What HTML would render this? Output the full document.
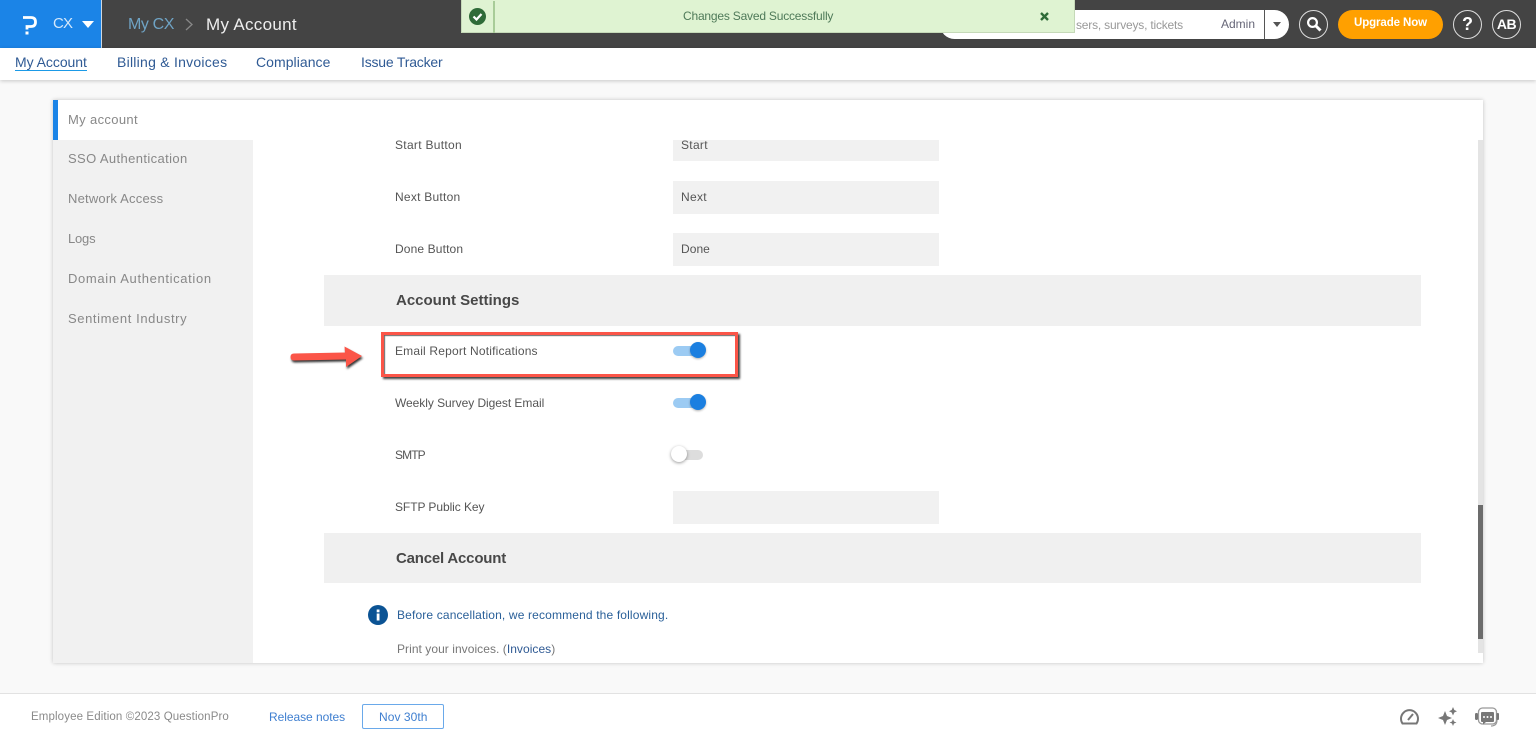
<!DOCTYPE html>
<html><head><meta charset="utf-8"><style>
html,body{margin:0;padding:0;width:1536px;height:739px;overflow:hidden;background:#f9f9f9;font-family:"Liberation Sans",sans-serif}
.t{position:absolute;white-space:nowrap;line-height:16px}
.b{position:absolute}
.lab{font-size:12px;color:#555;letter-spacing:.25px}
.side{font-size:13px;color:#888;left:68px}
.nav{font-size:14px;color:#2f5a94;top:54px}
.inp{position:absolute;left:673px;width:266px;background:#f1f1f1}
.inpt{font-size:12px;color:#555;left:681px;letter-spacing:.3px}
.tr{position:absolute;left:673px;width:30px;height:10px;border-radius:5px;background:#9ccbf3}
.kn{position:absolute;left:690px;width:16px;height:16px;border-radius:50%;background:#1b7fe0;box-shadow:0 1px 2px rgba(0,0,0,.3)}
.sec{position:absolute;left:324px;width:1097px;background:#f0f0f0}
.h{font-size:15px;font-weight:bold;color:#484848;left:396px}
.circ{position:absolute;top:10px;width:27px;height:27px;border:1px solid #ddd;border-radius:50%;color:#fff;text-align:center;font-weight:bold;line-height:27px}
</style></head><body>
<div class="b" style="left:0;top:0;width:1536px;height:48px;background:#444"></div>
<div class="b" style="left:0;top:0;width:101px;height:48px;background:#1b84e7;border-right:1px solid #cfd8e0"></div>
<svg class="b" style="left:20px;top:14px" width="20" height="22" viewBox="0 0 20 22"><path d="M3 3.500H11Q15.500 3.500 15.500 8Q15.500 12.500 11 12.500H7V15.500" fill="none" stroke="#fff" stroke-width="2.800"/><rect x="5.500" y="17.500" width="3" height="3" fill="#fff"/></svg>
<div class="t" style="left:53px;top:16px;font-size:15px;letter-spacing:-.8px;color:#d5e8fa">CX</div>
<svg class="b" style="left:82px;top:21px" width="12" height="7"><path d="M0 0H12L6 7Z" fill="#fff"/></svg>
<div class="t" style="left:128px;top:17px;font-size:16px;color:#6fa3c4;letter-spacing:-.4px">My CX</div>
<svg class="b" style="left:185px;top:18px" width="9" height="13"><path d="M1 1L7 6.500L1 12" fill="none" stroke="#888" stroke-width="1.300"/></svg>
<div class="t" style="left:206px;top:17px;font-size:17px;color:#eee;letter-spacing:.3px">My Account</div>

<div class="b" style="left:940px;top:10px;width:349px;height:29px;background:#fff;border-radius:15px"></div>
<div class="t" style="left:1076px;top:17px;font-size:12px;color:#999;letter-spacing:-.2px">sers, surveys, tickets</div>
<div class="t" style="left:1221px;top:16px;font-size:12px;color:#667">Admin</div>
<div class="b" style="left:1264px;top:10px;width:1px;height:29px;background:#555"></div>
<svg class="b" style="left:1273px;top:22px" width="8" height="5"><path d="M0 0H8L4 5Z" fill="#555"/></svg>
<div class="circ" style="left:1299px"></div>
<svg class="b" style="left:1305px;top:15px" width="18" height="18"><circle cx="7.500" cy="7.500" r="4.400" fill="none" stroke="#fff" stroke-width="2.200"/><path d="M11 11L15.500 15.500" stroke="#fff" stroke-width="3"/></svg>
<div class="b" style="left:1338px;top:10px;width:105px;height:29px;border-radius:15px;background:#ffa000"></div>
<div class="t" style="left:1354px;top:15px;font-size:11.500px;font-weight:bold;color:#fff;letter-spacing:-.1px">Upgrade Now</div>
<div class="circ" style="left:1453px;font-size:18px">?</div>
<div class="circ" style="left:1492px;font-size:14px;letter-spacing:-.5px">AB</div>

<div class="b" style="left:461px;top:0;width:614px;height:33px;background:#dff3d2;border:1px solid #c5d9b8;border-top:0;box-sizing:border-box"></div>
<div class="b" style="left:493px;top:1px;width:2px;height:32px;background:#a8cc98"></div>
<svg class="b" style="left:468px;top:7px" width="19" height="19"><circle cx="9.500" cy="9.500" r="8.500" fill="#2f6b38"/><path d="M5.500 9.500L8.500 12.500L13.500 7" fill="none" stroke="#fff" stroke-width="2.200"/></svg>
<div class="t" style="left:683px;top:8px;font-size:12px;color:#4f7a59;letter-spacing:-.2px">Changes Saved Successfully</div>
<svg class="b" style="left:1040px;top:12px" width="9" height="9"><path d="M1 1L8 8M8 1L1 8" stroke="#2f6b38" stroke-width="2.400"/></svg>

<div class="b" style="left:0;top:48px;width:1536px;height:32px;background:#fff;box-shadow:0 1px 4px rgba(0,0,0,.2)"></div>
<div class="t nav" style="left:15px;letter-spacing:-.05px">My Account</div>
<div class="b" style="left:15px;top:70px;width:72px;height:1px;background:#1b9ae7"></div>
<div class="t nav" style="left:117px;letter-spacing:.25px">Billing &amp; Invoices</div>
<div class="t nav" style="left:256px;letter-spacing:.05px">Compliance</div>
<div class="t nav" style="left:361px;letter-spacing:-.2px">Issue Tracker</div>

<div class="b" style="left:53px;top:100px;width:1430px;height:563px;background:#fff;box-shadow:0 0 4px rgba(0,0,0,.22)"></div>
<div class="b" style="left:53px;top:140px;width:200px;height:523px;background:#f1f1f1"></div>
<div class="b" style="left:53px;top:100px;width:5px;height:40px;background:#1b84e7"></div>
<div class="t side" style="top:112px;letter-spacing:.35px">My account</div>
<div class="t side" style="top:151px;letter-spacing:.38px">SSO Authentication</div>
<div class="t side" style="top:191px;letter-spacing:.2px">Network Access</div>
<div class="t side" style="top:231px;letter-spacing:-.2px">Logs</div>
<div class="t side" style="top:271px;letter-spacing:.65px">Domain Authentication</div>
<div class="t side" style="top:311px;letter-spacing:.6px">Sentiment Industry</div>

<div class="inp" style="top:140px;height:21px"></div>
<div class="t lab" style="left:395px;top:137px;letter-spacing:.3px">Start Button</div>
<div class="t inpt" style="top:137px">Start</div>
<div class="inp" style="top:181px;height:33px"></div>
<div class="t lab" style="left:395px;top:189px">Next Button</div>
<div class="t inpt" style="top:189px">Next</div>
<div class="inp" style="top:233px;height:33px"></div>
<div class="t lab" style="left:395px;top:241px;letter-spacing:.13px">Done Button</div>
<div class="t inpt" style="top:241px;letter-spacing:.05px">Done</div>
<div class="sec" style="top:275px;height:51px"></div>
<div class="t h" style="top:293px">Account Settings</div>

<div class="b" style="left:381px;top:332px;width:357px;height:45px;box-sizing:border-box;border:3px solid #fb5548;box-shadow:2px 2px 2px rgba(0,0,0,.75),inset 1px 1px 1px rgba(0,0,0,.6)"></div>
<svg class="b" style="left:286px;top:342px;filter:drop-shadow(1px 2px 1px rgba(0,0,0,.8))" width="84" height="32"><path d="M8 11.500L59 10.500L58.500 4.500L76 14L60 25L60 17.500L8 18.500Q4.500 18.500 4.500 15Q4.500 11.500 8 11.500Z" fill="#fb5548"/></svg>

<div class="t lab" style="left:395px;top:343px;letter-spacing:.18px">Email Report Notifications</div>
<div class="tr" style="top:346px"></div><div class="kn" style="top:342px"></div>
<div class="t lab" style="left:395px;top:395px;letter-spacing:-.05px">Weekly Survey Digest Email</div>
<div class="tr" style="top:398px"></div><div class="kn" style="top:394px"></div>
<div class="t lab" style="left:395px;top:447px;letter-spacing:-.9px">SMTP</div>
<div class="tr" style="top:450px;background:#ddd"></div><div class="kn" style="top:446px;left:671px;background:#fff;box-shadow:0 1px 3px rgba(0,0,0,.4)"></div>
<div class="t lab" style="left:395px;top:499px;letter-spacing:-.07px">SFTP Public Key</div>
<div class="inp" style="top:491px;height:33px"></div>
<div class="sec" style="top:533px;height:50px"></div>
<div class="t h" style="top:551px;letter-spacing:-.2px">Cancel Account</div>

<svg class="b" style="left:368px;top:605px" width="20" height="20"><circle cx="10" cy="10" r="10" fill="#0b5394"/><rect x="8.700" y="8.500" width="2.800" height="7" fill="#fff"/><rect x="8.700" y="4.500" width="2.800" height="2.800" fill="#fff"/></svg>
<div class="t" style="left:397px;top:607px;font-size:12px;color:#2a6099;letter-spacing:.15px">Before cancellation, we recommend the following.</div>
<div class="t" style="left:397px;top:641px;font-size:12px;color:#777;letter-spacing:.05px">Print your invoices. (<span style="color:#2f5a94">Invoices</span>)</div>

<div class="b" style="left:1478px;top:140px;width:5px;height:513px;background:#e4e4e4"></div>
<div class="b" style="left:1478px;top:505px;width:5px;height:134px;background:#6c6c6c"></div>

<div class="b" style="left:0;top:693px;width:1536px;height:46px;background:#fff;border-top:1px solid #e2e2e2;box-sizing:border-box"></div>
<div class="t" style="left:31px;top:709px;font-size:11.500px;color:#8a8a8a;letter-spacing:.12px">Employee Edition ©2023 QuestionPro</div>
<div class="t" style="left:269px;top:709px;font-size:12px;color:#3f7fd0;letter-spacing:-.05px">Release notes</div>
<div class="b" style="left:362px;top:704px;width:82px;height:25px;box-sizing:border-box;border:1px solid #6aa9ea;border-radius:2px"></div>
<div class="t" style="left:379px;top:709px;font-size:12px;color:#3f7fd0;letter-spacing:.05px">Nov 30th</div>
<svg class="b" style="left:1399px;top:708px" width="21" height="17"><path d="M3.500 15.500A8.500 8.500 0 1 1 17.500 15.500Z" fill="none" stroke="#777" stroke-width="2"/><path d="M9 12L14 6" stroke="#777" stroke-width="2"/></svg>
<svg class="b" style="left:1438px;top:707px" width="20" height="19"><path d="M7 4L9 9L14 11L9 13L7 18L5 13L0 11L5 9ZM15 0L16.300 3L19 4.300L16.300 5.500L15 8.500L13.700 5.500L11 4.300L13.700 3ZM15 12L16 14.500L18.500 15.500L16 16.500L15 19L14 16.500L11.500 15.500L14 14.500Z" fill="#777"/></svg>
<svg class="b" style="left:1475px;top:707px" width="27" height="21"><rect x="3.500" y="1" width="18" height="16" rx="4" fill="none" stroke="#999" stroke-width="1.300"/><path d="M7 5H18Q19 5 19 6V14Q19 15 18 15H11L8 17.500V15H7Q6 15 6 14V6Q6 5 7 5Z" fill="#777"/><rect x="0" y="6" width="3" height="7" rx="1.200" fill="#777"/><rect x="21.500" y="6" width="2.500" height="7" rx="1" fill="#777"/><path d="M22 13Q22 19 16 19" fill="none" stroke="#999" stroke-width="1.200"/><circle cx="9" cy="10" r="1" fill="#fff"/><circle cx="12.500" cy="10" r="1" fill="#fff"/><circle cx="16" cy="10" r="1" fill="#fff"/></svg>
</body></html>
